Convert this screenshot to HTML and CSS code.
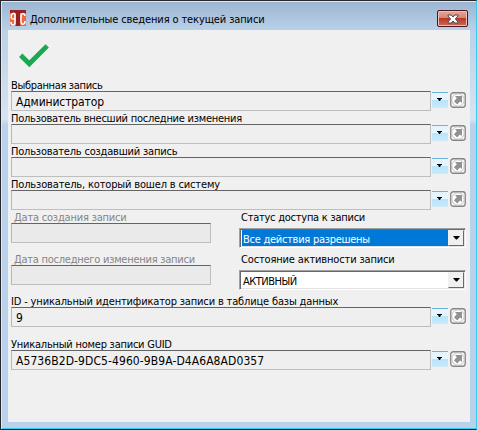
FILE: index.html
```
<!DOCTYPE html>
<html lang="ru">
<head>
<meta charset="utf-8">
<title>Дополнительные сведения о текущей записи</title>
<link rel="stylesheet" href="styles.css">
</head>
<body>
<svg width="0" height="0" class="defs">
  <symbol id="open" viewBox="0 0 16 16">
    <rect x=".75" y=".75" width="14.5" height="14.5" rx="2.5" fill="#f5f5f5" stroke="#858585" stroke-width="1.3"/>
    <circle cx="8" cy="8" r="6.2" fill="#fff" stroke="#b5b5b5" stroke-width=".8"/>
    <path d="M5 4H12V11L10 9.4L7.2 12.4L3.9 9.2L6.8 6.3Z" fill="#929292"/>
  </symbol>
  <symbol id="drop" viewBox="0 0 16 14"><path d="M5 5H10V6H9L8 8H7L6 6H5Z" fill="#000"/></symbol>
</svg>
<div class="window">
  <header class="titlebar">
    <svg class="logo" viewBox="0 0 16 16">
      <path d="M0 0H16V16H0Z" fill="#972021"/>
      <path d="M0 3H6V16H0ZM10 3H16V16H10Z" fill="#ef6a42"/>
      <path d="M1 5.5Q3 1.8 5 4.5V12Q5 15 3 15Q1 15 1 12M1.3 5V8Q2 9.3 5 8.7" fill="none" stroke="#fff" stroke-width="1.5"/>
      <path d="M14.8 6V5Q13 1.8 11 5V12Q12 16 14.8 13V11" fill="none" stroke="#fff" stroke-width="1.5"/>
    </svg>
    <h1>Дополнительные сведения о текущей записи</h1>
    <button class="close" aria-label="Закрыть"><svg viewBox="0 0 12 10"><path d="M1 1H4.2L6 3L7.8 1H11V2L8.4 5L11 8V9H7.8L6 7L4.2 9H1V8L3.6 5L1 2Z" fill="#fff" stroke="#4b4858"/></svg></button>
  </header>
  <main class="client">
    <svg class="check" viewBox="0 0 32 26"><path d="M2.7 12.3L11.3 20.8L29.2 2.9" fill="none" stroke="#19aa50" stroke-width="4.8"/></svg>
    <section class="row"><label class="w1">Выбранная запись</label><div class="line"><div class="field v1">Администратор</div><svg class="drop"><use href="#drop"/></svg><svg class="open"><use href="#open"/></svg></div></section>
    <section class="row"><label class="w2">Пользователь внесший последние изменения</label><div class="line"><div class="field"></div><svg class="drop"><use href="#drop"/></svg><svg class="open"><use href="#open"/></svg></div></section>
    <section class="row"><label class="w3">Пользователь создавший запись</label><div class="line"><div class="field"></div><svg class="drop"><use href="#drop"/></svg><svg class="open"><use href="#open"/></svg></div></section>
    <section class="row"><label class="w4">Пользователь, который вошел в систему</label><div class="line"><div class="field"></div><svg class="drop"><use href="#drop"/></svg><svg class="open"><use href="#open"/></svg></div></section>
    <div class="columns">
      <div class="dates">
        <section class="date"><label class="w5">Дата создания записи</label><div class="field"></div></section>
        <section class="date"><label class="w6">Дата последнего изменения записи</label><div class="field"></div></section>
      </div>
      <div class="states">
        <section class="state"><label class="w7">Статус доступа к записи</label><div class="combo"><span class="selected">Все действия разрешены</span><i><svg viewBox="0 0 16 16"><path d="M5 6H12L9 9.5H8Z"/></svg></i></div></section>
        <section class="state"><label class="w8">Состояние активности записи</label><div class="combo"><span class="active">АКТИВНЫЙ</span><i><svg viewBox="0 0 16 16"><path d="M5 6H12L9 9.5H8Z"/></svg></i></div></section>
      </div>
    </div>
    <section class="row"><label class="w9">ID - уникальный идентификатор записи в таблице базы данных</label><div class="line"><div class="field">9</div><svg class="drop"><use href="#drop"/></svg><svg class="open"><use href="#open"/></svg></div></section>
    <section class="row guid"><label class="w10">Уникальный номер записи GUID</label><div class="line"><div class="field v2">A5736B2D-9DC5-4960-9B9A-D4A6A8AD0357</div><svg class="drop"><use href="#drop"/></svg><svg class="open"><use href="#open"/></svg></div></section>
  </main>
</div>
</body>
</html>
```
FILE: styles.css
```
* { box-sizing: border-box; }
body { margin: 0; overflow: hidden; font: 11px/13px "DejaVu Sans Condensed", "DejaVu Sans", sans-serif; font-stretch: condensed; color: #000; }
.defs { display: none; }
.window {
  width: 477px; height: 430px; padding: 0 6px 6px 7px;
  border: 1px solid #29262b; border-right-color: #35cdee; border-bottom-color: #29262b;
  background: linear-gradient(#9bb5d1, #bad1e9 30px, #d7e4f2 118px, #b9d1ea 124px);
  box-shadow: inset 1px 1px #dce9f6, inset 0 -1px #35cdee;
}
.titlebar { height: 29px; display: flex; align-items: flex-start; padding-left: 2px; }
.logo { width: 16px; height: 16px; margin-top: 9px; }
h1 { margin: 11px 0 0 4px; font-size: 11px; font-weight: normal; line-height: 15px; white-space: nowrap; letter-spacing: -.12px; }
.close { margin: 9px 2px 0 auto; width: 31px; height: 17px; padding: 0; display: grid; place-items: center; border: 1px solid #471621; border-radius: 2px; background: linear-gradient(#e5a79c, #d68373 48%, #b83a26 50%, #cc6a54); box-shadow: inset 0 0 0 1px #f2bfb8; }
.close svg { width: 12px; height: 10px; }
.client { width: 462px; height: 392px; padding: 13px 0 0 3px; background: #f0f0f0; }
.check { display: block; width: 32px; height: 26px; margin: 0 0 9px 7px; }
.row { height: 33px; }
label { display: block; height: 13px; line-height: 15px; white-space: nowrap; }
.line { display: flex; }
.field { width: 420px; height: 20px; padding: 0 0 0 4px; border: 1px solid #bebebe; border-top-color: #646464; border-left-color: #b8b8bc; background: #efefef; font-size: 12px; line-height: 20px; white-space: nowrap; }
.drop { width: 16px; height: 16px; margin: 1px 0 0 1px; border-top: 1px solid #71b2dc; border-bottom: 1px solid #d5e9f5; background: linear-gradient(#e6f5fd 48%, #b9e4fa 52%, #c5e9fb); }
.open { width: 16px; height: 16px; margin: 1px 0 0 2px; }
.columns { display: flex; height: 84px; }
.dates { width: 228px; }
.date { height: 42px; }
.date label { padding-left: 3px; color: #858585; }
.date .field { width: 200px; background: #eaeaea; }
.states { width: 227px; }
.state { height: 42px; }
.state label { height: 18px; padding-left: 2px; }
.combo { display: flex; width: 227px; height: 20px; padding: 1px; border: 1px solid #a0a0a0; border-right-color: #fff; border-bottom-color: #fff; background: #fff; box-shadow: inset 1px 1px #696969, inset -1px -1px #e3e3e3; }
.combo span { width: 206px; height: 16px; margin: 0 0 0 1px; line-height: 19px; padding-left: 1px; white-space: nowrap; }
.combo .selected { background: #0078d7; color: #fff; letter-spacing: -.27px; }
.combo .active { letter-spacing: -.5px; }
.combo i { display: block; width: 16px; height: 16px; border: 1px solid #f0f0f0; border-right-color: #696969; border-bottom-color: #696969; background: #f0f0f0; }
.combo svg { display: block; width: 16px; height: 16px; margin: -1px; }
.guid { margin-top: 10px; }
.w1 { letter-spacing: -.33px; }
.w2, .w6, .w7 { letter-spacing: -.25px; }
.w3, .w5 { letter-spacing: -.2px; }
.w4, .w8, .w9 { letter-spacing: -.155px; }
.w10 { letter-spacing: -.23px; }
.v1 { letter-spacing: -.12px; }
.v2 { letter-spacing: .085px; }
```
